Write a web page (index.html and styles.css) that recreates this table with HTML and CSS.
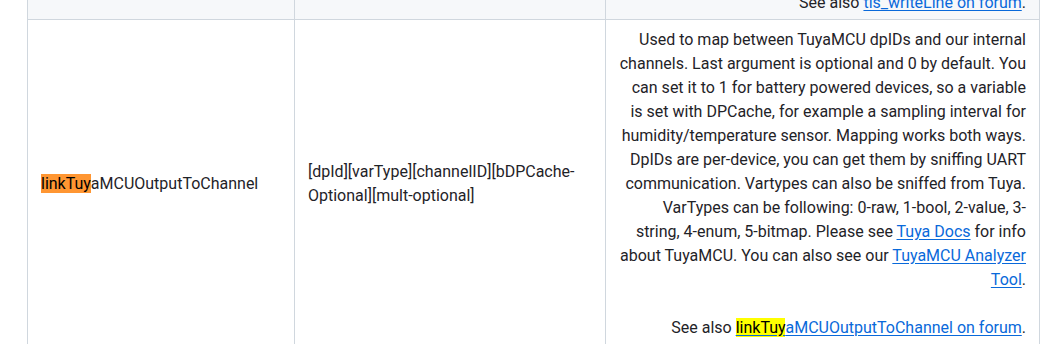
FILE: index.html
```html
<!DOCTYPE html>
<html lang="en">
<head>
<meta charset="utf-8">
<title>Commands</title>
<link rel="stylesheet" href="styles.css">
</head>
<body>
<table class="cmd-table">
  <colgroup>
    <col class="col-name">
    <col class="col-args">
    <col class="col-desc">
  </colgroup>
  <tbody>
    <tr class="row-stripe">
      <td></td>
      <td></td>
      <td class="desc">See also <a href="#">tls_writeLine on forum</a>.</td>
    </tr>
    <tr>
      <td><mark class="hit-active">linkTuy</mark>aMCUOutputToChannel</td>
      <td>[dpId][varType][channelID][bDPCache-Optional][mult-optional]</td>
      <td class="desc">Used to map between TuyaMCU dpIDs and our internal channels. Last argument is optional and 0 by default. You can set it to 1 for battery powered devices, so a variable is set with DPCache, for example a sampling interval for humidity/temperature sensor. Mapping works both ways. DpIDs are per-device, you can get them by sniffing UART communication. Vartypes can also be sniffed from Tuya. VarTypes can be following: 0-raw, 1-bool, 2-value, 3-<br>string, 4-enum, 5-bitmap. Please see <a href="#">Tuya Docs</a> for info<br>about TuyaMCU. You can also see our <a href="#">TuyaMCU Analyzer<br>Tool</a>.<br><br>See also <a href="#"><mark class="hit">linkTuy</mark>aMCUOutputToChannel on forum</a>.</td>
    </tr>
  </tbody>
</table>
</body>
</html>
```
FILE: styles.css
```css
html, body {
  margin: 0;
  background: #ffffff;
}
body {
  padding: 0 0 0 27px;
  font-family: Roboto, "Noto Sans", sans-serif;
  font-size: 16px;
  line-height: 24px;
  color: #1f2328;
  overflow: hidden;
}
.cmd-table {
  border-collapse: collapse;
  table-layout: fixed;
  width: 1012px;
  margin-top: -18px;
}
.col-name { width: 267px; }
.col-args { width: 311px; }
.col-desc { width: 434px; }
.cmd-table td {
  border: 1px solid #d0d7de;
  padding: 8px 13px 4px;
  vertical-align: middle;
}
.row-stripe {
  background: #f6f8fa;
}
.cmd-table td.desc {
  text-align: right;
}
a {
  color: #0969da;
  text-decoration: underline;
  text-underline-offset: 2px;
}
mark {
  color: #000000;
}
.hit-active {
  background: #ff9632;
}
.hit {
  background: #ffff00;
}
```
